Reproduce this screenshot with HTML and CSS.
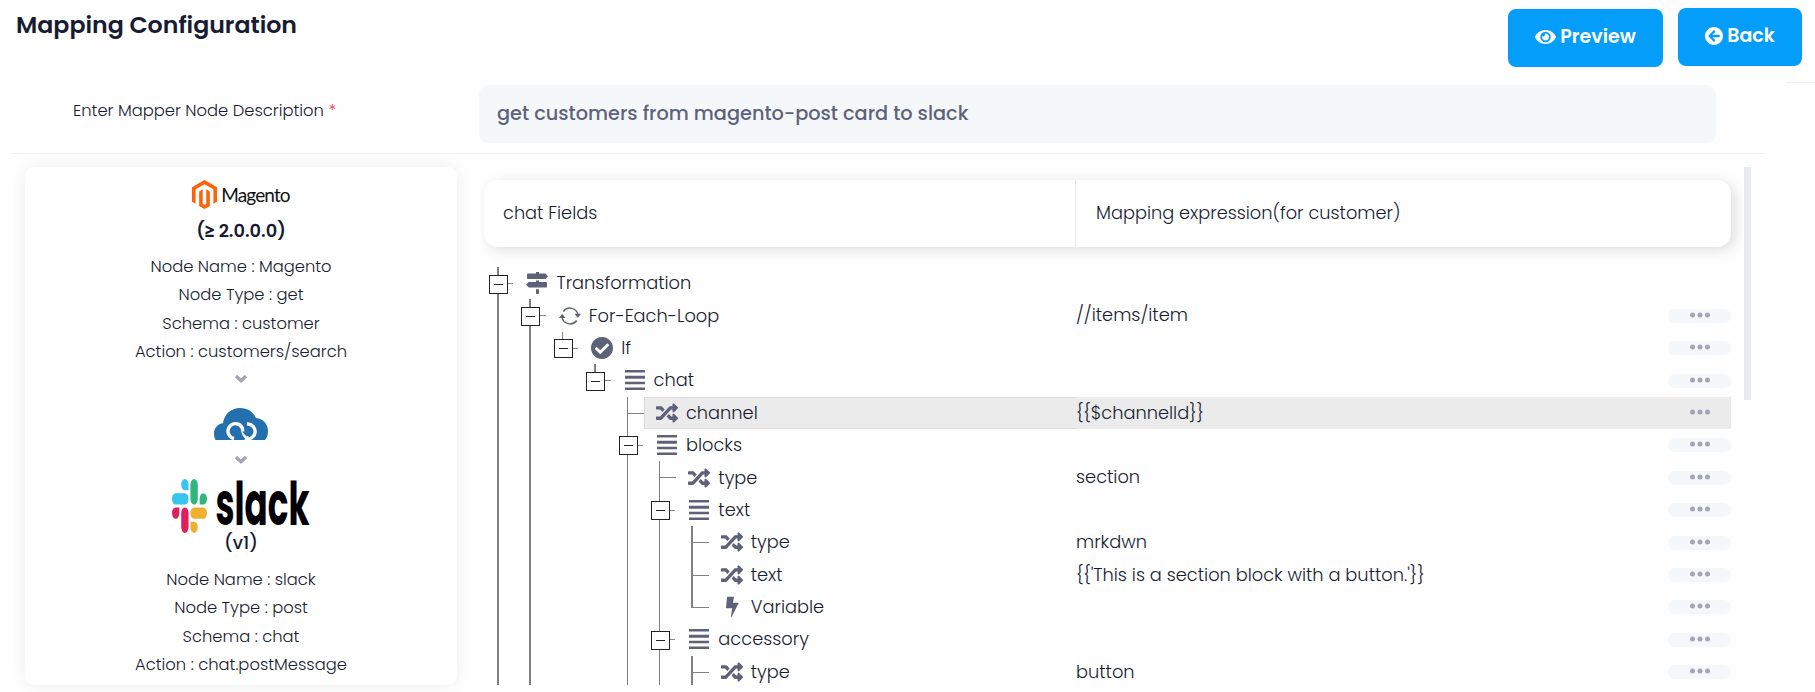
FILE: index.html
```html
<!DOCTYPE html>
<html lang="en">
<head>
  <meta charset="UTF-8" />
  <meta name="viewport" content="width=device-width, initial-scale=1.0"/>
  <title>Mapping Configuration</title>
  <link rel="stylesheet" href="styles.css">
</head>
<body>

  <!-- Shared icons -->
  <svg class="icon-defs" width="0" height="0">
    <symbol id="shuffle" viewBox="0 0 512 512"><path d="M504.971 359.029c9.373 9.373 9.373 24.569 0 33.941l-80 79.984c-15.01 15.01-40.971 4.49-40.971-16.971V416h-58.785a12.004 12.004 0 0 1-8.773-3.812l-70.556-75.596 53.333-57.143L352 336h32v-39.981c0-21.438 25.943-31.998 40.971-16.971l80 79.981zM12 176h84l52.781 56.551 53.333-57.143-70.556-75.596A11.999 11.999 0 0 0 122.785 96H12c-6.627 0-12 5.373-12 12v56c0 6.627 5.373 12 12 12zm372 0v39.984c0 21.46 25.961 31.98 40.971 16.971l80-79.984c9.373-9.373 9.373-24.569 0-33.941l-80-79.981C409.943 24.021 384 34.582 384 56.019V96h-58.785a12.004 12.004 0 0 0-8.773 3.812L96 336H12c-6.627 0-12 5.373-12 12v56c0 6.627 5.373 12 12 12h110.785c3.326 0 6.503-1.381 8.773-3.812L352 176h32z"/></symbol>
    <symbol id="check" viewBox="8 8 496 496"><path d="M504 256c0 136.967-111.033 248-248 248S8 392.967 8 256 119.033 8 256 8s248 111.033 248 248zM227.314 387.314l184-184c6.248-6.248 6.248-16.379 0-22.627l-22.627-22.627c-6.248-6.249-16.379-6.249-22.628 0L216 308.118l-70.059-70.059c-6.248-6.248-16.379-6.248-22.628 0l-22.627 22.627c-6.248 6.248-6.248 16.379 0 22.627l104 104c6.249 6.249 16.379 6.249 22.628.001z"/></symbol>
    <symbol id="bars" viewBox="0 0 22 22"><path d="M1 1h20v2.500H1zM1 6.800h20v3H1zM1 12.800h20v2.500H1zM1 18.600h20v2.500H1z"/></symbol>
    <symbol id="bolt" viewBox="0 0 22 22"><path d="M6.500 .8h6.500l-1 6h5.200q.6 0 .3.8L10.500 21q-.7.600-.6-.4l1.300-8.400H5.600q-.7 0-.6-.7l1-10q.1-.7.500-.7z"/></symbol>
    <symbol id="signs" viewBox="0 0 22 22"><path d="M10 0h3v1.500h6.500L22 4.200 19.500 7H2.200Q1 7 1 6V2.500q0-1 1.200-1H10zM10 8.500h3V10h7q1 0 1 1v3.500q0 1-1 1H2.800L0 12.800 2.800 10H10zM10 17.300h3v4q0 .7-.7.700h-1.600q-.7 0-.7-.7z"/></symbol>
    <symbol id="loop" viewBox="0 0 22 22"><path d="M4.300 6.500A8.200 8.200 0 0 1 19 10M17.700 15.500A8.200 8.200 0 0 1 3 12" fill="none" stroke="currentColor" stroke-width="1.500"/><path d="M15.500 8.700H22l-3.200 4.300zM0 13h6.500L3.200 8.700z"/></symbol>
    <symbol id="chevron" viewBox="0 0 14 10"><path d="M2 2l5 4.700L12 2" fill="none" stroke="currentColor" stroke-width="3.300"/></symbol>
    <symbol id="dots" viewBox="0 0 20 6"><circle cx="2.500" cy="3" r="2.500"/><circle cx="10" cy="3" r="2.500"/><circle cx="17.500" cy="3" r="2.500"/></symbol>
  </svg>

  <!-- Page Header -->
  <header>
    <h1>Mapping Configuration</h1>
    <div class="actions">
      <button type="button" class="btn btn-preview">
        <svg class="eye" viewBox="0 64 576 384"><path d="M572.52 241.4C518.29 135.59 410.93 64 288 64S57.68 135.64 3.48 241.41a32.35 32.35 0 0 0 0 29.19C57.71 376.41 165.07 448 288 448s230.32-71.64 284.52-177.41a32.35 32.35 0 0 0 0-29.19zM288 400a144 144 0 1 1 144-144 143.93 143.93 0 0 1-144 144zm0-240a95.31 95.31 0 0 0-25.310 3.790 47.850 47.850 0 0 1-66.900 66.900A95.780 95.780 0 1 0 288 160z"/></svg>
        <span>Preview</span>
      </button>
      <button type="button" class="btn btn-back">
        <svg class="arrow" viewBox="8 8 496 496"><path d="M256 504C119 504 8 393 8 256S119 8 256 8s248 111 248 248-111 248-248 248zm28.900-143.600L209.400 288H392c13.300 0 24-10.700 24-24v-16c0-13.300-10.700-24-24-24H209.400l75.500-72.400c9.700-9.300 9.900-24.800.4-34.300l-11-10.900c-9.400-9.400-24.600-9.400-33.900 0L107.700 239c-9.400 9.400-9.400 24.600 0 33.900l132.700 132.700c9.400 9.400 24.600 9.400 33.900 0l11-10.900c9.500-9.500 9.300-25-.4-34.300z"/></svg>
        <span>Back</span>
      </button>
    </div>
  </header>

  <!-- Description -->
  <div class="description">
    <label for="description">Enter Mapper Node Description <span class="required">*</span></label>
    <input type="text" id="description" value="get customers from magento-post card to slack" />
  </div>

  <main>
    <!-- Source and target nodes -->
    <aside class="nodes">
      <div class="magento-logo">
        <svg viewBox="1.609 0 20.782 24" preserveAspectRatio="none"><path d="M12 24l-4.455-2.572v-12l2.970-1.715v12.001l1.485.902 1.485-.902V7.713l2.971 1.715v12L12 24zM22.391 6v12l-2.969 1.714V7.713L12 3.430 4.574 7.713v12.001L1.609 18V6L12 0l10.391 6z"/></svg>
        <span>Magento</span>
      </div>
      <h3>(<span class="gte">≥</span> 2.0.0.0)</h3>
      <p>Node Name : Magento</p>
      <p>Node Type : get</p>
      <p>Schema : customer</p>
      <p>Action : customers/search</p>
      <svg class="chevron"><use href="#chevron"/></svg>
      <svg class="cloud" viewBox="0 0 54 32">
        <path d="M1.500 32Q0 29 0 25.500C0 20 4 15.800 9 15.300 10 6.500 17 0 26 0c7.500 0 13.500 4 16 10 7 .5 12 6 12 13 0 4-1 6.500-3 9z" fill="#246fae"/>
        <path d="M20 30.500A7.500 7.500 0 1 1 28.300 20Q29 28 34 30" fill="none" stroke="#fff" stroke-width="3.400"/>
        <path d="M33 16A7.500 7.500 0 1 1 31 30.500" fill="none" stroke="#fff" stroke-width="3.400"/>
        <path d="M21.500 17.500l4.500 5h-2.800q0 5 3.300 9-5.500-2-6-9h-3.500z" fill="#246fae"/>
        <path d="M32.500 28.500l-4.500-5h2.800q0-5-3.300-9 5.500 2 6 9H37z" fill="#246fae"/>
      </svg>
      <svg class="chevron"><use href="#chevron"/></svg>
      <svg class="slack-logo" viewBox="0 0 138 54">
        <g transform="scale(1.458 2.250)">
          <path fill="#e01e5a" d="M5.042 15.165a2.528 2.528 0 0 1-2.520 2.523A2.528 2.528 0 0 1 0 15.165a2.527 2.527 0 0 1 2.522-2.520h2.520v2.520zM6.313 15.165a2.527 2.527 0 0 1 2.521-2.520 2.527 2.527 0 0 1 2.521 2.520v6.313A2.528 2.528 0 0 1 8.834 24a2.528 2.528 0 0 1-2.521-2.522v-6.313z"/>
          <path fill="#36c5f0" d="M8.834 5.042a2.528 2.528 0 0 1-2.521-2.520A2.528 2.528 0 0 1 8.834 0a2.528 2.528 0 0 1 2.521 2.522v2.520H8.834zM8.834 6.313a2.528 2.528 0 0 1 2.521 2.521 2.528 2.528 0 0 1-2.521 2.521H2.522A2.528 2.528 0 0 1 0 8.834a2.528 2.528 0 0 1 2.522-2.521h6.312z"/>
          <path fill="#2eb67d" d="M18.956 8.834a2.528 2.528 0 0 1 2.522-2.521A2.528 2.528 0 0 1 24 8.834a2.528 2.528 0 0 1-2.522 2.521h-2.522V8.834zM17.688 8.834a2.528 2.528 0 0 1-2.523 2.521 2.527 2.527 0 0 1-2.520-2.521V2.522A2.527 2.527 0 0 1 15.165 0a2.528 2.528 0 0 1 2.523 2.522v6.312z"/>
          <path fill="#ecb22e" d="M15.165 18.956a2.528 2.528 0 0 1 2.523 2.522A2.528 2.528 0 0 1 15.165 24a2.527 2.527 0 0 1-2.520-2.522v-2.522h2.520zM15.165 17.688a2.527 2.527 0 0 1-2.520-2.523 2.526 2.526 0 0 1 2.520-2.520h6.313A2.527 2.527 0 0 1 24 15.165a2.528 2.528 0 0 1-2.522 2.523h-6.313z"/>
        </g>
        <text x="43.500" y="45.500" textLength="94" lengthAdjust="spacingAndGlyphs">slack</text>
      </svg>
      <h3 class="version">(v1)</h3>
      <p>Node Name : slack</p>
      <p>Node Type : post</p>
      <p>Schema : chat</p>
      <p>Action : chat.postMessage</p>
    </aside>

    <!-- Mapping tree -->
    <section class="mapping">
      <div class="mapping-head">
        <div class="head-fields">chat Fields</div>
        <div class="head-expression">Mapping expression(for customer)</div>
      </div>

      <div class="tree">
        <div class="row">
          <div class="field"><i class="toggle open"></i><div class="node"><svg><use href="#signs"/></svg>Transformation</div></div>
        </div>
        <div class="row">
          <div class="field"><i class="line"></i><i class="toggle open"></i><div class="node"><svg><use href="#loop"/></svg>For-Each-Loop</div></div>
          <div class="expression">//items/item</div>
          <button type="button" class="more"><svg><use href="#dots"/></svg></button>
        </div>
        <div class="row">
          <div class="field"><i class="line"></i><i class="line"></i><i class="toggle"></i><div class="node"><svg><use href="#check"/></svg>If</div></div>
          <div class="expression"></div>
          <button type="button" class="more"><svg><use href="#dots"/></svg></button>
        </div>
        <div class="row">
          <div class="field"><i class="line"></i><i class="line"></i><i></i><i class="toggle"></i><div class="node"><svg><use href="#bars"/></svg>chat</div></div>
          <div class="expression"></div>
          <button type="button" class="more"><svg><use href="#dots"/></svg></button>
        </div>
        <div class="row selected">
          <div class="field"><i class="line"></i><i class="line"></i><i></i><i></i><i class="line branch"></i><div class="node"><svg><use href="#shuffle"/></svg>channel</div></div>
          <div class="expression">{{$channelId}}</div>
          <button type="button" class="more"><svg><use href="#dots"/></svg></button>
        </div>
        <div class="row">
          <div class="field"><i class="line"></i><i class="line"></i><i></i><i></i><i class="toggle open"></i><div class="node"><svg><use href="#bars"/></svg>blocks</div></div>
          <div class="expression"></div>
          <button type="button" class="more"><svg><use href="#dots"/></svg></button>
        </div>
        <div class="row">
          <div class="field"><i class="line"></i><i class="line"></i><i></i><i></i><i class="line"></i><i class="line branch"></i><div class="node"><svg><use href="#shuffle"/></svg>type</div></div>
          <div class="expression">section</div>
          <button type="button" class="more"><svg><use href="#dots"/></svg></button>
        </div>
        <div class="row">
          <div class="field"><i class="line"></i><i class="line"></i><i></i><i></i><i class="line"></i><i class="toggle open"></i><div class="node"><svg><use href="#bars"/></svg>text</div></div>
          <div class="expression"></div>
          <button type="button" class="more"><svg><use href="#dots"/></svg></button>
        </div>
        <div class="row">
          <div class="field"><i class="line"></i><i class="line"></i><i></i><i></i><i class="line"></i><i class="line"></i><i class="line branch"></i><div class="node"><svg><use href="#shuffle"/></svg>type</div></div>
          <div class="expression">mrkdwn</div>
          <button type="button" class="more"><svg><use href="#dots"/></svg></button>
        </div>
        <div class="row">
          <div class="field"><i class="line"></i><i class="line"></i><i></i><i></i><i class="line"></i><i class="line"></i><i class="line branch"></i><div class="node"><svg><use href="#shuffle"/></svg>text</div></div>
          <div class="expression">{{'This is a section block with a button.'}}</div>
          <button type="button" class="more"><svg><use href="#dots"/></svg></button>
        </div>
        <div class="row">
          <div class="field"><i class="line"></i><i class="line"></i><i></i><i></i><i class="line"></i><i class="line"></i><i class="line branch last"></i><div class="node"><svg><use href="#bolt"/></svg>Variable</div></div>
          <div class="expression"></div>
          <button type="button" class="more"><svg><use href="#dots"/></svg></button>
        </div>
        <div class="row">
          <div class="field"><i class="line"></i><i class="line"></i><i></i><i></i><i class="line"></i><i class="toggle open"></i><div class="node"><svg><use href="#bars"/></svg>accessory</div></div>
          <div class="expression"></div>
          <button type="button" class="more"><svg><use href="#dots"/></svg></button>
        </div>
        <div class="row">
          <div class="field"><i class="line"></i><i class="line"></i><i></i><i></i><i class="line"></i><i class="line"></i><i class="line branch"></i><div class="node"><svg><use href="#shuffle"/></svg>type</div></div>
          <div class="expression">button</div>
          <button type="button" class="more"><svg><use href="#dots"/></svg></button>
        </div>
      </div>
    </section>

    <div class="scrollbar"></div>
  </main>

</body>
</html>
```
FILE: styles.css
```css
* {
  box-sizing: border-box;
}

body {
  margin: 0;
  height: 692px;
  overflow: hidden;
  font-family: Poppins, Inter, "Open Sans", sans-serif;
  font-weight: 300;
  color: #181c32;
  background-color: #fefefe;
}

h1, h3, p {
  margin: 0;
}

svg {
  display: block;
  flex: none;
  fill: currentColor;
}

.icon-defs {
  display: none;
}

/* Page Header */
header {
  display: flex;
  justify-content: space-between;
  height: 82px;
  padding: 8px 0 0 16px;
}

h1 {
  font-size: 23.7px;
  line-height: 33px;
  font-weight: 600;
}

.actions {
  display: flex;
  gap: 15px;
}

/* short rule under the buttons, at the right edge of the page */
.actions::after {
  content: "";
  align-self: flex-end;
  width: 29px;
  height: 1px;
  margin: 0 0 -1px -31px;
  background-color: #eff0f2;
}

.btn {
  display: flex;
  justify-content: center;
  gap: 4px;
  height: 58px;
  padding: 12px 0 0;
  border: none;
  border-radius: 8px;
  background-color: #049dfa;
  color: #fff;
  font-family: inherit;
  font-size: 19px;
  line-height: 32px;
  font-weight: 600;
  cursor: pointer;
}

.btn-preview {
  width: 155px;
  margin-top: 1px;
}

.btn-back {
  width: 124px;
}

.eye {
  width: 21px;
  height: 14px;
  margin-top: 9px;
}

.arrow {
  width: 18px;
  height: 18px;
  margin-top: 7px;
}

/* Description */
.description {
  display: flex;
  height: 72px;
  width: 1752px;
  margin-left: 12px;
  padding: 3px 0 0 61px;
  border-bottom: 1px solid #eff0f2;
}

label {
  width: 406px;
  font-size: 16.35px;
  line-height: 51px;
}

.required {
  color: #f1416c;
}

input {
  width: 1237px;
  height: 58px;
  padding: 0 18px 2px;
  border: none;
  border-radius: 9px;
  background-color: #f4f8fb;
  color: #5e6278;
  font-family: inherit;
  font-size: 19.3px;
  font-weight: 500;
}

main {
  display: flex;
  height: 531px;
  padding: 13px 0 0 25px;
}

/* Source and target nodes */
.nodes {
  display: flex;
  flex-direction: column;
  align-items: center;
  width: 432px;
  height: 518px;
  padding-top: 13px;
  border-radius: 9px;
  background-color: #fff;
  box-shadow: 0 0 16px rgba(0, 0, 0, 0.07);
}

.nodes p {
  font-size: 16.35px;
  line-height: 28.3px;
}

.nodes h3 {
  margin: 8px 0 8px;
  font-size: 17.8px;
  line-height: 28px;
  font-weight: 600;
}

.gte {
  font-family: "Open Sans", sans-serif;
  font-size: 17px;
  line-height: 1;
  font-weight: 800;
}

.magento-logo {
  display: flex;
  gap: 4px;
  height: 29px;
  color: #111;
  font-family: Lato, sans-serif;
  font-size: 19px;
  line-height: 29px;
  font-weight: 400;
  letter-spacing: -0.9px;
}

.magento-logo svg {
  width: 25px;
  height: 29px;
  fill: #ff6207;
}

.chevron {
  width: 14px;
  height: 10px;
  color: #a1a5b7;
}

.nodes .chevron {
  margin-top: 8px;
}

.cloud {
  width: 54px;
  height: 32px;
  margin: 24px 0 7px;
}

.slack-logo {
  width: 138px;
  height: 54px;
  margin-top: 14px;
  overflow: visible;
  fill: #000;
  font-family: Poppins, Lato, sans-serif;
  font-size: 60px;
  font-weight: 700;
}

.nodes .version {
  margin: -4px 0 9px;
  font-weight: 500;
}

/* Mapping tree */
.mapping {
  width: 1262px;
  height: 518px;
  margin-left: 24px;
  overflow: hidden;
}

.mapping-head {
  display: flex;
  width: 1247px;
  height: 67px;
  margin: 13px 0 20px 3px;
  border-radius: 14px;
  background-color: #fff;
  box-shadow: 4px 3px 14px rgba(0, 0, 0, 0.13);
  font-size: 17.75px;
  line-height: 66px;
}

.head-fields {
  width: 592px;
  padding-left: 19px;
  border-right: 1px solid #eaeaea;
}

.head-expression {
  padding-left: 20px;
}

.row {
  display: flex;
  height: 32.4px;
  font-size: 17.8px;
  line-height: 32px;
}

.field {
  display: flex;
  width: 595px;
}

/* Guide lines, one cell for each level */
.field i {
  position: relative;
  flex: none;
  width: 32.4px;
}

.line::before,
.toggle::before {
  content: "";
  position: absolute;
  left: 16px;
  top: 0;
  bottom: 0;
  width: 1.5px;
  background-color: #808080;
}

.toggle::before {
  bottom: 24px;
}

.toggle.open::before,
.line::before {
  bottom: 0;
}

.line.last::before {
  bottom: 15px;
}

.branch::after {
  content: "";
  position: absolute;
  left: 16px;
  right: -1px;
  top: 16px;
  height: 1px;
  background-color: #808080;
}

.toggle::after {
  content: "";
  position: absolute;
  left: 8px;
  top: 7.5px;
  width: 17px;
  height: 17px;
  border: 1px solid #222;
  background: linear-gradient(#222, #222) center / 9px 1px no-repeat #fff;
}

.toggle {
  background: linear-gradient(#888, #888) 27px 16px / 6px 1px no-repeat;
}

.node {
  display: flex;
  align-items: center;
  flex: 1;
  gap: 8px;
  margin-left: 1px;
  padding-left: 12px;
  white-space: nowrap;
}

.node svg {
  width: 22px;
  height: 22px;
  color: #5e6278;
}

.expression {
  width: 592px;
}

.more {
  display: flex;
  justify-content: center;
  width: 63px;
  height: 14px;
  margin-top: 9.500px;
  padding: 3px 0 0;
  border: none;
  border-radius: 7px;
  background-color: #f4f8fb;
  color: #a1a5b7;
  cursor: pointer;
}

.more svg {
  width: 20px;
  height: 6px;
}

.selected .node {
  border: 1px solid #dcdcdc;
  border-right: none;
  padding-left: 11px;
}

.selected .node,
.selected .expression,
.selected .more {
  background-color: #ebebeb;
}

.selected .more {
  height: 32px;
  margin: 0;
  padding-top: 12px;
  border-radius: 0;
}

.scrollbar {
  width: 7px;
  height: 233px;
  margin-left: 1px;
  background-color: #e8ecf1;
}
```
